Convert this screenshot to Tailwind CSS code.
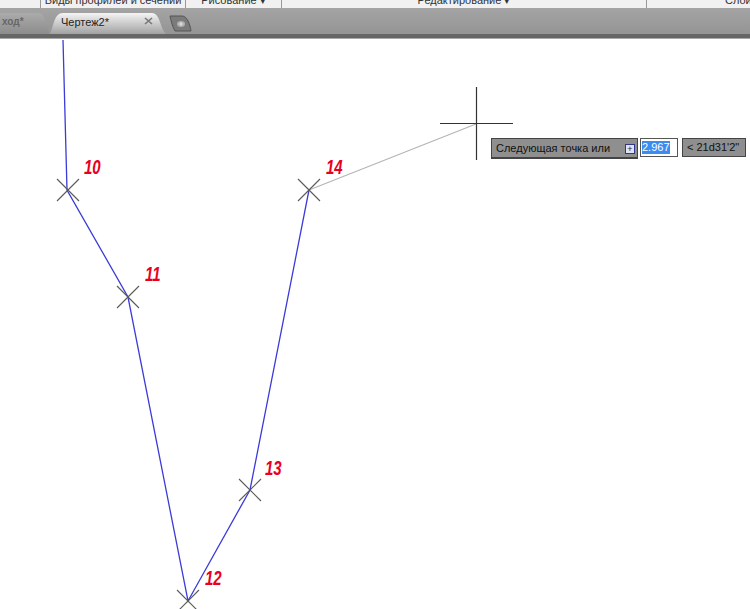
<!DOCTYPE html>
<html lang="ru">
<head>
  <meta charset="UTF-8" />
  <title>Чертеж2</title>
  <script src="https://cdn.jsdelivr.net/npm/@tailwindcss/browser@4"></script>
</head>
<body class="bg-white w-[750px] h-[609px] overflow-hidden font-['Liberation_Sans',sans-serif]">

  <!-- ribbon panel titles, cut off at the top -->
  <div class="flex h-[8px] bg-[#f1f1f1] overflow-hidden text-[11px] leading-[8px] text-[#333]">
    <div class="w-[41px] shrink-0 border-r border-[#999]"></div>
    <div class="w-[145px] shrink-0 border-r border-[#999] text-center whitespace-nowrap -mt-[4px]">Виды профилей и сечений</div>
    <div class="w-[96px] shrink-0 border-r border-[#999] text-center whitespace-nowrap -mt-[4px]">Рисование ▾</div>
    <div class="w-[365px] shrink-0 border-r border-[#999] text-center whitespace-nowrap -mt-[4px]">Редактирование ▾</div>
    <div class="w-[103px] shrink-0 pl-[78px] whitespace-nowrap -mt-[4px]">Слои</div>
  </div>

  <!-- drawing tabs -->
  <div class="relative h-[31px] bg-gradient-to-b from-[#a4a4a4] to-[#929292] border-b-[1px] border-[#a8a8a8]">
    <div class="absolute left-0 right-0 bottom-0 h-[4px] bg-[#666]"></div>
    <svg class="absolute left-0 top-0" width="200" height="30" viewBox="0 8 200 30">
      <defs>
        <linearGradient id="activeTab" x1="0" y1="0" x2="0" y2="1">
          <stop offset="0" stop-color="#f4f4f4"/>
          <stop offset="1" stop-color="#a2a2a2"/>
        </linearGradient>
        <linearGradient id="idleTab" x1="0" y1="0" x2="0" y2="1">
          <stop offset="0" stop-color="#ababab"/>
          <stop offset="1" stop-color="#8c8c8c"/>
        </linearGradient>
      </defs>
      <path d="M0 13H38C44 13 46 20 49 34H0Z" fill="url(#idleTab)"/>
      <path d="M50 34C54 26 54 13 63 13H152C160 13 160 28 166 34Z" fill="url(#activeTab)"/>
      <path d="M170 16H182C187 16 190 24 191 31H175C172 26 171 20 170 16Z" fill="#7b7b7b" stroke="#555"/>
      <ellipse cx="181" cy="24" rx="4" ry="3" fill="#b0b0b0"/>
      <path d="M181 22V26M179 24H183" stroke="#e4e4e4"/>
      <path d="M145 18L152 24M152 18L145 24" stroke="#777" stroke-width="1.6"/>
    </svg>
    <span class="absolute left-[2px] top-[8px] text-[10px] font-bold leading-[12px] text-[#666]">ход*</span>
    <span class="absolute left-[61px] top-[8px] text-[11px] leading-[12px] text-[#222]">Чертеж2*</span>
  </div>

  <!-- model space -->
  <div class="relative h-[570px]">
    <svg class="absolute left-0 top-0" width="750" height="570" viewBox="0 39 750 570" fill="none">
      <polyline points="63,40 67,190 128,297 188,601 250,490 309,190" stroke="#3b3bd8" stroke-width="1.3"/>
      <line x1="309" y1="190" x2="476" y2="124" stroke="#b5b5b5" stroke-width="1.2"/>
      <g stroke="#5a5a5a" stroke-width="1.1">
        <path d="M57 179L79 201M79 179L57 201"/>
        <path d="M117 286L139 308M139 286L117 308"/>
        <path d="M177 590L199 612M199 590L177 612"/>
        <path d="M239 479L261 501M261 479L239 501"/>
        <path d="M298 179L320 201M320 179L298 201"/>
      </g>
      <path d="M440 123.500H513M476.500 87V160" stroke="#333" stroke-width="1.2"/>
    </svg>

    <span class="absolute left-[84px] top-[117px] origin-left scale-x-75 text-[20px] leading-[22px] italic font-bold text-[#e8001c]">10</span>
    <span class="absolute left-[145px] top-[224px] origin-left scale-x-75 text-[20px] leading-[22px] italic font-bold text-[#e8001c]">11</span>
    <span class="absolute left-[205px] top-[528px] origin-left scale-x-75 text-[20px] leading-[22px] italic font-bold text-[#e8001c]">12</span>
    <span class="absolute left-[265px] top-[418px] origin-left scale-x-75 text-[20px] leading-[22px] italic font-bold text-[#e8001c]">13</span>
    <span class="absolute left-[326px] top-[117px] origin-left scale-x-75 text-[20px] leading-[22px] italic font-bold text-[#e8001c]">14</span>

    <!-- dynamic input tooltip -->
    <div class="absolute left-[491px] top-[99px] flex items-start gap-[2px] text-[11px] text-[#111]">
      <div class="relative w-[147px] h-[21px] bg-[#8f8f8f] border border-[#444] border-b-2 pl-[4px] leading-[18px]">
        Следующая точка или
        <span class="absolute right-[2px] top-[5px] w-[10px] h-[10px] bg-[#dfe3f5] border border-[#34348a] text-[9px] leading-[8px] text-center text-[#222]">+</span>
      </div>
      <div class="w-[38px] h-[19px] bg-white border border-[#555] pl-[1px] pt-[2px]">
        <span class="block w-[28px] h-[13px] bg-[#3a8cf0] text-white leading-[13px]">2.967</span>
      </div>
      <div class="ml-[2px] w-[64px] h-[19px] bg-[#8f8f8f] border border-[#444] pl-[4px] leading-[16px] whitespace-nowrap">&lt; 21d31'2"</div>
    </div>
  </div>
</body>
</html>
